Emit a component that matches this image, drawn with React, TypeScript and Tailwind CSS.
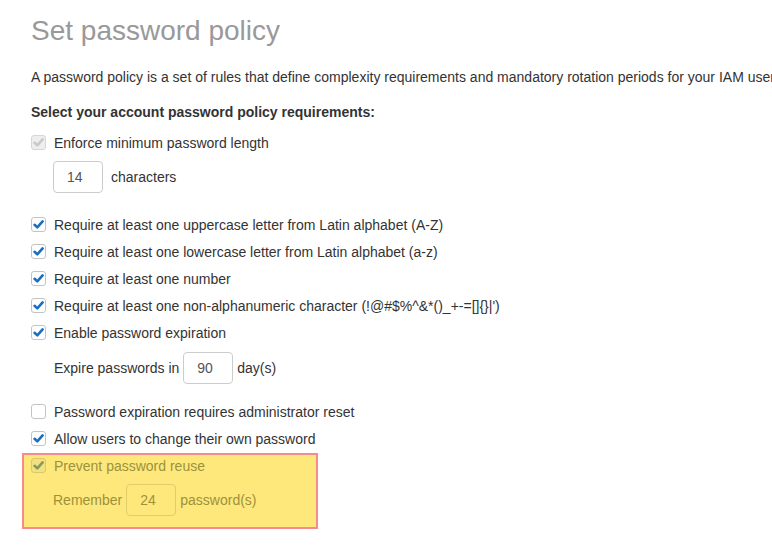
const rows = [
  { label: "Require at least one uppercase letter from Latin alphabet (A-Z)", checked: true },
  { label: "Require at least one lowercase letter from Latin alphabet (a-z)", checked: true },
  { label: "Require at least one number", checked: true },
  { label: "Require at least one non-alphanumeric character (!@#$%^&*()_+-=[]{}|')", checked: true },
  { label: "Enable password expiration", checked: true },
];

function Check({ checked, variant = "normal" }: { checked: boolean; variant?: "normal" | "disabled" | "highlight" }) {
  const box =
    variant === "disabled"
      ? "bg-[#eeeeee] border-[#d6d6d6]"
      : variant === "highlight"
      ? "bg-[#f5e07c] border-[#dcc76a]"
      : "bg-white border-[#c4c4c4]";
  const stroke = variant === "disabled" ? "#c9c9c9" : variant === "highlight" ? "#7f9a63" : "#1b6ec2";
  return (
    <span className={`flex h-[15px] w-[15px] shrink-0 items-center justify-center rounded-[3px] border ${box}`}>
      {checked && (
        <svg width="11" height="11" viewBox="0 0 11 11">
          <path d="M1.6 5.8 L4.3 8.4 L9.6 2.4" fill="none" stroke={stroke} strokeWidth="2.6" strokeLinecap="round" strokeLinejoin="round" />
        </svg>
      )}
    </span>
  );
}

function Row({ label, checked, variant }: { label: string; checked: boolean; variant?: "normal" | "disabled" | "highlight" }) {
  return (
    <div className="flex h-[27px] items-center gap-[8px] whitespace-nowrap">
      <Check checked={checked} variant={variant} />
      <span className="leading-[20px]">{label}</span>
    </div>
  );
}

function NumBox({ value, highlight = false }: { value: string; highlight?: boolean }) {
  return (
    <span
      className={`flex h-[32px] w-[50px] items-center rounded-[4px] border pl-[13px] ${
        highlight ? "border-[#e2cc6c]" : "border-[#cccccc] bg-white text-[#555555]"
      }`}
    >
      {value}
    </span>
  );
}

export default function App() {
  return (
    <div className="h-[558px] w-[772px] overflow-hidden bg-white pl-[31px] pt-[14px] text-[14px] text-[#333333] [font-family:'Liberation_Sans',Arial,sans-serif]">
      <h1 className="text-[28px] leading-[34px] text-[#999999]">Set password policy</h1>

      <p className="mt-[19px] whitespace-nowrap leading-[20px]">
        A password policy is a set of rules that define complexity requirements and mandatory rotation periods for your IAM users.
      </p>

      <div className="mt-[15px] font-bold leading-[20px]">Select your account password policy requirements:</div>

      <div className="mt-[7px]">
        <Row label="Enforce minimum password length" checked variant="disabled" />
      </div>
      <div className="mt-[5px] ml-[22px] flex items-center gap-[8px]">
        <NumBox value="14" />
        <span>characters</span>
      </div>

      <div className="mt-[18px]">
        {rows.map((r) => (
          <Row key={r.label} label={r.label} checked={r.checked} />
        ))}
      </div>

      <div className="mt-[6px] ml-[23px] flex items-center gap-[4px]">
        <span>Expire passwords in</span>
        <NumBox value="90" />
        <span>day(s)</span>
      </div>

      <div className="mt-[14px]">
        <Row label="Password expiration requires administrator reset" checked={false} />
        <Row label="Allow users to change their own password" checked />
      </div>

      {/* highlighted reuse block */}
      <div className="ml-[-9px] mt-[1px] w-[296px] border-2 border-[#f68a8c] bg-[#fee87c] pb-[11px] pl-[7px] text-[#9c923a]">
        <div className="mt-[-3px]">
          <Row label="Prevent password reuse" checked variant="highlight" />
        </div>
        <div className="mt-[5px] ml-[22px] flex items-center gap-[4px]">
          <span>Remember</span>
          <NumBox value="24" highlight />
          <span>password(s)</span>
        </div>
      </div>
    </div>
  );
}
